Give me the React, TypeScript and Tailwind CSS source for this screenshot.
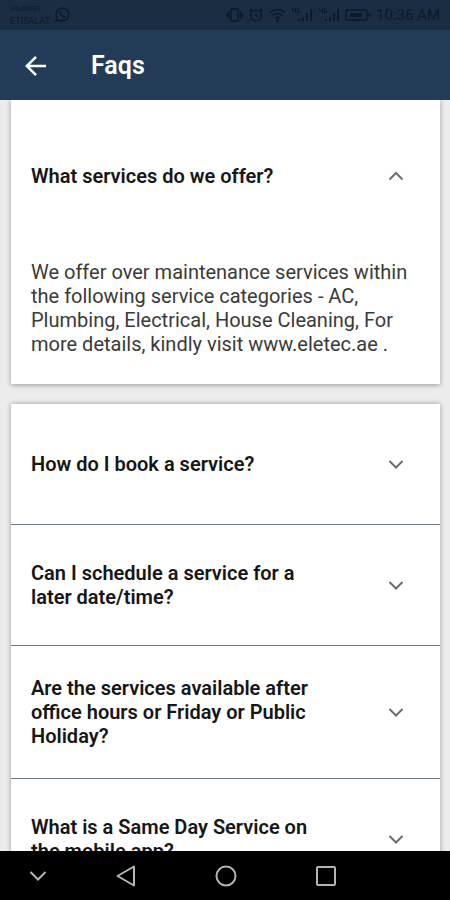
import React, { useState } from 'react';

interface Faq {
  id: string;
  question: string;
  answer: string;
}

const faqs: Faq[] = [
  {
    id: 'services',
    question: 'What services do we offer?',
    answer:
      'We offer over maintenance services within the following service categories - AC, Plumbing, Electrical, House Cleaning, For more details, kindly visit www.eletec.ae .'
  },
  { id: 'book', question: 'How do I book a service?', answer: '' },
  { id: 'schedule', question: 'Can I schedule a service for a later date/time?', answer: '' },
  { id: 'hours', question: 'Are the services available after office hours or Friday or Public Holiday?', answer: '' },
  { id: 'same-day', question: 'What is a Same Day Service on the mobile app?', answer: '' }
];

const Signal: React.FC = () => (
  <svg width="22" height="16" viewBox="0 0 22 16" fill="currentColor" aria-hidden="true">
    <path d="M1 1h1v2h2V1h1v5H4V4H1zM6 1h2v1H7v3h1V3h1v3H6zM7 12h2v2H7zM11 10h2v4h-2zM15 6h2v8h-2zM19 2h2v12h-2z" />
  </svg>
);

const StatusBar: React.FC = () => (
  <div className="flex h-[30px] shrink-0 items-center justify-between bg-[#1a2d42] px-2.5 text-[#0d1a29]">
    <div className="flex items-center gap-1">
      <div className="flex flex-col leading-3">
        <span className="text-[8px]">HUAWEI</span>
        <span className="text-[9px]">ETISALAT</span>
      </div>
      <svg width="16" height="16" viewBox="0 0 16 16" fill="none" stroke="currentColor" strokeWidth="1.5" aria-hidden="true">
        <path d="M2 14l1-3.3A6.3 6.3 0 1 1 5.4 13z" />
        <path d="M5.5 5c0 3 2.5 5.500 5.500 5.500l.5-1.500-1.700-.8-.8.8c-1-.5-1.700-1.200-2-2l.7-.8L7 4.500z" fill="currentColor" stroke="none" />
      </svg>
    </div>
    <div className="flex items-center gap-[5px]">
      <svg width="17" height="16" viewBox="0 0 17 16" fill="none" stroke="currentColor" strokeWidth="1.5" aria-hidden="true">
        <path d="M5 2h7v12H5zM2.5 4v8M14.5 4v8M.7 6v4M16.3 6v4" />
      </svg>
      <svg width="16" height="16" viewBox="0 0 16 16" fill="none" stroke="currentColor" strokeWidth="1.5" aria-hidden="true">
        <circle cx="8" cy="8.5" r="5.5" />
        <path d="M8 5.5v3l2 1.5M1.5 4L4 1.7M14.5 4L12 1.7" />
      </svg>
      <svg width="17" height="16" viewBox="0 0 17 16" fill="none" stroke="currentColor" strokeWidth="1.7" aria-hidden="true">
        <path d="M1 5.5c4.5-4 10.500-4 15 0M3.500 8.500c3-2.700 7-2.700 10 0M6 11.300c1.600-1.300 3.400-1.300 5 0" />
        <circle cx="8.5" cy="13.5" r=".8" fill="currentColor" />
      </svg>
      <Signal />
      <Signal />
      <svg width="26" height="16" viewBox="0 0 26 16" fill="none" stroke="currentColor" strokeWidth="1.5" aria-hidden="true">
        <rect x="1" y="3" width="21" height="10" rx="1.5" />
        <path d="M24.5 6v4" />
        <path d="M5 6h12v4H5z" fill="currentColor" stroke="none" />
      </svg>
      <span className="text-[15px] leading-5">10:36 AM</span>
    </div>
  </div>
);

const Chevron: React.FC<{ open: boolean }> = ({ open }) => (
  <svg width="16" height="16" viewBox="0 0 16 16" fill="none" stroke="#6d6d6d" strokeWidth="2" className="shrink-0" aria-hidden="true">
    <path d={open ? 'M1.5 11.5L8 5l6.5 6.5' : 'M1.5 5L8 11.5 14.5 5'} />
  </svg>
);

interface FaqItemProps {
  faq: Faq;
  open: boolean;
  onToggle: () => void;
}

const FaqItem: React.FC<FaqItemProps> = ({ faq, open, onToggle }) => (
  <div>
    <h2>
      <button
        type="button"
        aria-expanded={open}
        onClick={onToggle}
        className="flex min-h-[120px] w-full items-center justify-between py-[30px] pr-9 pl-5 text-left text-xl leading-6 font-semibold text-[#161616]"
      >
        <span className="w-[290px]">{faq.question}</span>
        <Chevron open={open} />
      </button>
    </h2>
    {open && faq.answer && (
      <p className="px-5 pt-6 pb-7 text-xl leading-6 text-[#3a3a3a]">{faq.answer}</p>
    )}
  </div>
);

const App: React.FC = () => {
  const [openId, setOpenId] = useState('services');

  const toggle = (id: string) => setOpenId(openId === id ? '' : id);

  const renderItem = (faq: Faq) => (
    <FaqItem key={faq.id} faq={faq} open={openId === faq.id} onToggle={() => toggle(faq.id)} />
  );

  return (
    <div className="flex h-screen flex-col bg-[#ececec] font-['Roboto',sans-serif]">
      <StatusBar />

      <header className="flex h-[70px] shrink-0 items-center gap-11 bg-[#223c58] pt-0.5 pl-[25px] text-white">
        <button type="button" aria-label="Back">
          <svg width="22" height="22" viewBox="0 0 22 22" fill="none" stroke="currentColor" strokeWidth="2.5" aria-hidden="true">
            <path d="M21 11H2.5M11 1.8L1.8 11l9.2 9.2" />
          </svg>
        </button>
        <h1 className="text-[25px] leading-8 font-semibold">Faqs</h1>
      </header>

      <main className="flex min-h-0 flex-1 flex-col gap-5 overflow-y-auto pr-2.5 pl-[11px] [scrollbar-width:none]">
        <section className="shrink-0 bg-white pt-4 shadow-[0_1px_5px_rgba(0,0,0,0.35)]">
          {faqs.slice(0, 1).map(renderItem)}
        </section>
        <section className="shrink-0 divide-y divide-[#6b7885] bg-white shadow-[0_0_5px_rgba(0,0,0,0.35)]">
          {faqs.slice(1).map(renderItem)}
        </section>
      </main>

      <nav className="grid h-[49px] shrink-0 grid-cols-[76px_1fr_1fr_1fr_74px] items-center justify-items-center bg-black text-[#b4b4b4]">
        <button type="button" aria-label="Hide navigation bar">
          <svg width="18" height="18" viewBox="0 0 18 18" fill="none" stroke="currentColor" strokeWidth="2" aria-hidden="true">
            <path d="M1.5 5L9 12.500 16.500 5" />
          </svg>
        </button>
        <button type="button" aria-label="Back to previous screen">
          <svg width="20" height="22" viewBox="0 0 20 22" fill="none" stroke="currentColor" strokeWidth="2" strokeLinejoin="round" aria-hidden="true">
            <path d="M18 1.5v19L1.5 11z" />
          </svg>
        </button>
        <button type="button" aria-label="Home">
          <svg width="22" height="22" viewBox="0 0 22 22" fill="none" stroke="currentColor" strokeWidth="2" aria-hidden="true">
            <circle cx="11" cy="11" r="9.5" />
          </svg>
        </button>
        <button type="button" aria-label="Recent apps">
          <svg width="20" height="20" viewBox="0 0 20 20" fill="none" stroke="currentColor" strokeWidth="2" aria-hidden="true">
            <rect x="1" y="1" width="18" height="18" rx="1" />
          </svg>
        </button>
      </nav>
    </div>
  );
};

export default App;
